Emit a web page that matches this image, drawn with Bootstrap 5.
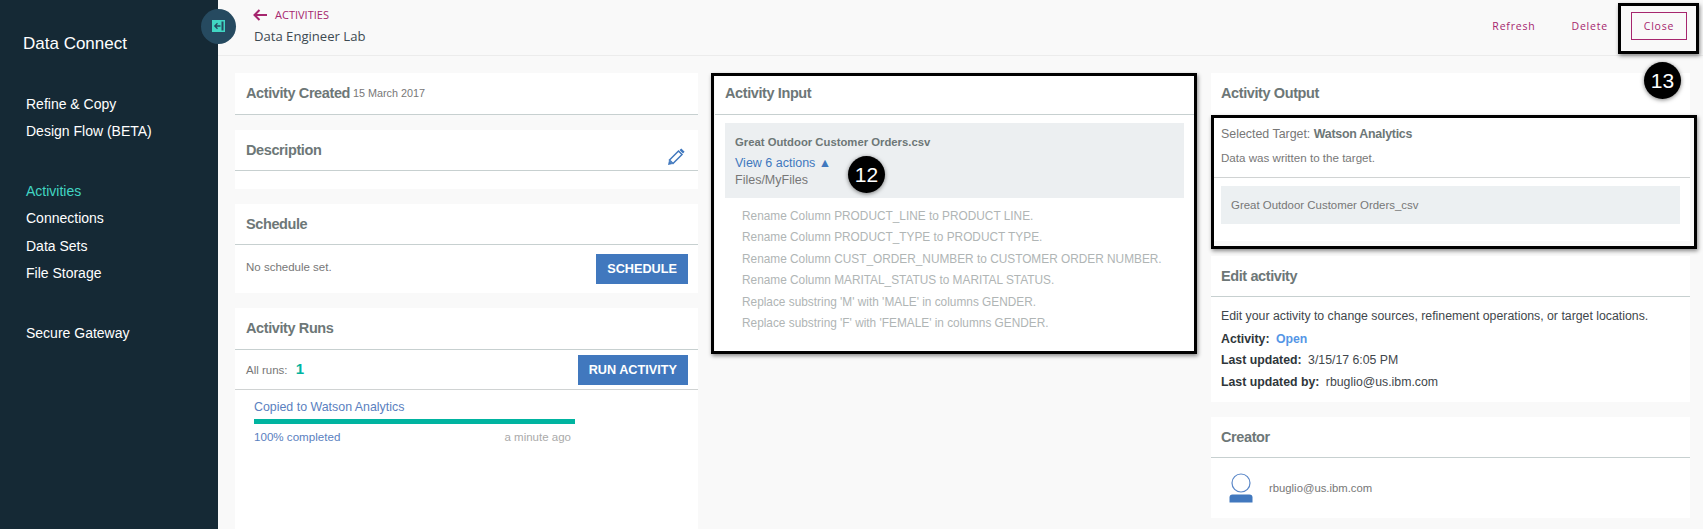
<!doctype html>
<html lang="en">
<head>
  <meta charset="utf-8">
  <meta name="viewport" content="width=device-width, initial-scale=1">
  <title>Data Connect</title>
  <link href="https://cdn.jsdelivr.net/npm/bootstrap@5.3.5/dist/css/bootstrap.min.css" rel="stylesheet">
  <style>
    html, body { height: 100%; }
    body { font-family: "Liberation Sans", Arial, sans-serif; background: #f9f9f9; color: #777; overflow: hidden; }

    /* sidebar */
    .side-bar { width: 218px; background: #152935; color: #fff; flex-shrink: 0; padding: 33px 0 0 23px; }
    .side-title { font-size: 17px; line-height: 22px; margin-bottom: 36px; }
    .side-nav { margin-left: 3px; margin-bottom: 32.5px; }
    .side-nav .nav-link { color: #fff; font-size: 14px; line-height: 27.3px; padding: 0; }
    .side-nav .nav-link.active { color: #41d6c3; }
    .toggle-btn { left: 200.5px; top: 8.5px; width: 35px; height: 35px; background: #264a60; z-index: 3; }

    /* top bar */
    .top-bar { height: 56px; border-bottom: 1px solid #ececec; padding: 6px 16px 0 35px; font-family: "Open Sans", sans-serif; }
    .back-link { color: #a6266e; font-size: 11px; line-height: 18px; text-decoration: none; }
    .page-name { color: #3d4a52; font-size: 13.1px; line-height: 20px; margin: 2px 0 0 1px; }
    .top-action { color: #a6266e; font-size: 10.5px; letter-spacing: .8px; line-height: 28px; text-decoration: none; }
    .top-action.boxed { border: 1px solid #a6266e; width: 56px; text-align: center; margin-left: -13px; line-height: 26px; }
    .top-actions { margin-top: 6px; gap: 36px; }

    /* three columns */
    .board { display: grid; grid-template-columns: 463px 479px 479px; gap: 17px; padding: 17px 0 0 17px; }
    .stack { gap: 15px; }
    .panel { background: #fff; border: 0; border-radius: 0; }
    .panel-head { height: 41px; padding: 2px 11px 0; border-bottom: 1px solid #c7d0d0; font-size: 14.5px; font-weight: 700; color: #6d7777; letter-spacing: -.4px; }
    .panel-head.tall { height: 42px; padding-top: 0; }
    .panel-head.inset { padding-left: 10px; padding-right: 10px; }
    .panel-head.no-line { border-bottom: 0; }
    .panel-head small { font-size: 10.8px; font-weight: 400; letter-spacing: 0; color: #777; margin-left: 3px; }
    .btn-blue { background: #4178be; border: 0; border-radius: 0; color: #fff; font-size: 12.7px; font-weight: 700; height: 30px; padding: 0 11px; line-height: 30px; }
    .btn-blue:hover { background: #4178be; color: #fff; }
    .small-text { font-size: 11.5px; color: #777; }

    .desc-card { height: 59px; }
    .pencil-icon { margin: 11px 2px 0 0; }
    .schedule-row { padding: 9px 10px 9px 11px; height: 48px; }
    .schedule-note { margin-top: 5px; }
    .runs-card { height: 240px; }
    .runs-row { height: 40px; padding: 0 10px 0 11px; border-bottom: 1px solid #d0d3d3; }
    .runs-count { color: #00b4a0; font-size: 15px; font-weight: 700; margin-left: 5px; }
    .run-item { width: 321px; margin: 9px 0 0 19px; }
    .run-link { color: #5a7fc0; font-size: 12.4px; text-decoration: none; line-height: 16px; display: block; }
    .run-link.tiny { font-size: 11.6px; }
    .run-bar { height: 5px; background: transparent; border-radius: 0; margin: 4px 0 5px; }
    .run-bar .progress-bar { background: #00b4a0; }
    .run-time { color: #aaa; font-size: 11.5px; margin-right: 4px; }

    .source-box { background: #eceff1; margin: 8px 10px 0; padding: 11px 10px 0; height: 75px; }
    .source-name { font-size: 11.3px; font-weight: 700; color: #6d7777; line-height: 16px; }
    .source-link { font-size: 12.5px; color: #4178be; text-decoration: none; line-height: 17px; display: block; margin-top: 5px; }
    .source-path { font-size: 12.5px; color: #777; line-height: 17px; }
    .action-list { margin: 8px 0 0 27px; padding: 0 0 19px; font-size: 11.85px; line-height: 21.4px; color: #b0b5b5; list-style: none; }

    .target-line { font-size: 12.4px; line-height: 16px; padding: 11px 10px 0; }
    .target-line b { color: #6d7777; letter-spacing: -.25px; }
    .target-note { font-size: 11.6px; line-height: 16px; padding: 8px 10px 11px; border-bottom: 1px solid #d0d3d3; }
    .target-box { background: #ecf0f2; margin: 8px 10px 17px; height: 38px; padding: 1px 0 0 10px; font-size: 11.45px; }

    .edit-card { height: 146px; }
    .edit-body { padding: 9px 10px 8px; font-size: 12.3px; color: #3f474c; line-height: 21.6px; }
    .edit-body .lead-line { margin-bottom: 1px; }
    .edit-body b { color: #2f363a; margin-right: 3px; }
    .open-link { color: #5596e6; font-weight: 700; text-decoration: none; }

    .creator-card { height: 101px; }
    .creator-row { height: 60px; padding-left: 18px; gap: 16px; font-size: 11.3px; }

    /* numbered callouts drawn on top of the screenshot */
    .callout { border: 3.5px solid #000; box-shadow: 1px 2px 4px rgba(0,0,0,.45); z-index: 4; pointer-events: none; }
    .callout-input { left: 711px; top: 73px; width: 486px; height: 281px; }
    .callout-output { left: 1211px; top: 115px; width: 486px; height: 134px; }
    .callout-close { left: 1618px; top: 3px; width: 81px; height: 51px; }
    .num-dot { width: 37px; height: 37px; background: #000; color: #fff; font-size: 21px; box-shadow: 0 1px 4px rgba(0,0,0,.5); z-index: 5; }
    .dot-12 { left: 848px; top: 156px; }
    .dot-13 { left: 1644px; top: 62px; }
  </style>
</head>

<body>
  <div class="d-flex h-100 position-relative">

    <!-- Sidebar -->
    <aside class="side-bar">
      <div class="side-title">Data Connect</div>
      <nav class="nav flex-column side-nav">
        <a class="nav-link" href="#">Refine &amp; Copy</a>
        <a class="nav-link" href="#">Design Flow (BETA)</a>
      </nav>
      <nav class="nav flex-column side-nav">
        <a class="nav-link active" href="#">Activities</a>
        <a class="nav-link" href="#">Connections</a>
        <a class="nav-link" href="#">Data Sets</a>
        <a class="nav-link" href="#">File Storage</a>
      </nav>
      <nav class="nav flex-column side-nav">
        <a class="nav-link" href="#">Secure Gateway</a>
      </nav>
    </aside>

    <div class="toggle-btn position-absolute rounded-circle d-flex align-items-center justify-content-center">
      <svg width="13" height="12" viewBox="0 0 13 12">
        <rect width="13" height="12" fill="#41d6c3"/>
        <rect x="9.5" y="1.5" width="2" height="9" fill="#264a60"/>
        <path d="M8.5 6H3M5.5 3.3 2.8 6 5.5 8.7" fill="none" stroke="#264a60" stroke-width="1.3"/>
      </svg>
    </div>

    <!-- Main -->
    <main class="flex-grow-1">
      <header class="top-bar d-flex justify-content-between">
        <div>
          <a class="back-link d-flex align-items-center gap-1" href="#">
            <svg class="me-1" width="14" height="12" viewBox="0 0 14 12"><path d="M14 6H1.5M6.5 1 1.5 6 6.5 11" fill="none" stroke="#a6266e" stroke-width="2"/></svg>
            ACTIVITIES
          </a>
          <div class="page-name">Data Engineer Lab</div>
        </div>
        <div class="top-actions d-flex align-items-start">
          <a class="top-action" href="#">Refresh</a>
          <a class="top-action" href="#">Delete</a>
          <a class="top-action boxed" href="#">Close</a>
        </div>
      </header>

      <div class="board">
        <!-- Left column -->
        <div class="d-flex flex-column stack">
          <section class="card panel">
            <div class="panel-head tall d-flex align-items-center">Activity Created <small>15 March 2017</small></div>
          </section>

          <section class="card panel desc-card">
            <div class="panel-head d-flex align-items-center justify-content-between">
              Description
              <svg class="pencil-icon" width="18" height="18" viewBox="0 0 18 18">
                <path d="M2.5 12 11.5 3 15 6.5 6 15.5Z" fill="none" stroke="#4178be" stroke-width="1.5"/>
                <path d="M1 17 2 12.5 5.5 16Z M12.5 2 14.3.4 17.6 3.7 16 5.5Z" fill="#4178be"/>
              </svg>
            </div>
          </section>

          <section class="card panel">
            <div class="panel-head d-flex align-items-center">Schedule</div>
            <div class="d-flex justify-content-between align-items-start small-text schedule-row">
              <span class="schedule-note">No schedule set.</span>
              <button class="btn btn-blue" type="button">SCHEDULE</button>
            </div>
          </section>

          <section class="card panel runs-card">
            <div class="panel-head tall d-flex align-items-center">Activity Runs</div>
            <div class="runs-row d-flex justify-content-between align-items-center small-text">
              <span>All runs: <span class="runs-count">1</span></span>
              <button class="btn btn-blue" type="button">RUN ACTIVITY</button>
            </div>
            <div class="run-item">
              <a class="run-link" href="#">Copied to Watson Analytics</a>
              <div class="progress run-bar"><div class="progress-bar" style="width:100%"></div></div>
              <div class="d-flex justify-content-between">
                <a class="run-link tiny" href="#">100% completed</a>
                <span class="run-time">a minute ago</span>
              </div>
            </div>
          </section>
        </div>

        <!-- Middle column -->
        <div class="d-flex flex-column stack">
          <section class="card panel">
            <div class="panel-head tall inset d-flex align-items-center">Activity Input</div>
            <div class="source-box">
              <div class="source-name">Great Outdoor Customer Orders.csv</div>
              <a class="source-link" href="#">View 6 actions &#9650;</a>
              <div class="source-path">Files/MyFiles</div>
            </div>
            <ul class="action-list">
              <li>Rename Column PRODUCT_LINE to PRODUCT LINE.</li>
              <li>Rename Column PRODUCT_TYPE to PRODUCT TYPE.</li>
              <li>Rename Column CUST_ORDER_NUMBER to CUSTOMER ORDER NUMBER.</li>
              <li>Rename Column MARITAL_STATUS to MARITAL STATUS.</li>
              <li>Replace substring 'M' with 'MALE' in columns GENDER.</li>
              <li>Replace substring 'F' with 'FEMALE' in columns GENDER.</li>
            </ul>
          </section>
        </div>

        <!-- Right column -->
        <div class="d-flex flex-column stack">
          <section class="card panel">
            <div class="panel-head tall inset no-line d-flex align-items-center">Activity Output</div>
            <div class="target-line">Selected Target: <b>Watson Analytics</b></div>
            <div class="target-note">Data was written to the target.</div>
            <div class="target-box d-flex align-items-center">Great Outdoor Customer Orders_csv</div>
          </section>

          <section class="card panel edit-card">
            <div class="panel-head inset d-flex align-items-center">Edit activity</div>
            <div class="edit-body">
              <div class="lead-line">Edit your activity to change sources, refinement operations, or target locations.</div>
              <div><b>Activity:</b> <a class="open-link" href="#">Open</a></div>
              <div><b>Last updated:</b> 3/15/17 6:05 PM</div>
              <div><b>Last updated by:</b> rbuglio@us.ibm.com</div>
            </div>
          </section>

          <section class="card panel creator-card">
            <div class="panel-head inset d-flex align-items-center">Creator</div>
            <div class="creator-row d-flex align-items-center">
              <svg width="24" height="30" viewBox="0 0 24 30">
                <circle cx="12" cy="10" r="9" fill="none" stroke="#5a87c8" stroke-width="1.2"/>
                <path d="M.5 29.5v-5q0-3 3-3h17q3 0 3 3v5Z" fill="#4178be"/>
              </svg>
              <span>rbuglio@us.ibm.com</span>
            </div>
          </section>
        </div>
      </div>
    </main>

    <!-- Callouts -->
    <div class="callout callout-input position-absolute"></div>
    <div class="callout callout-output position-absolute"></div>
    <div class="callout callout-close position-absolute"></div>
    <div class="num-dot dot-12 position-absolute rounded-circle d-flex align-items-center justify-content-center">12</div>
    <div class="num-dot dot-13 position-absolute rounded-circle d-flex align-items-center justify-content-center">13</div>
  </div>

  <script src="https://cdn.jsdelivr.net/npm/bootstrap@5.3.5/dist/js/bootstrap.bundle.min.js"></script>
</body>
</html>
